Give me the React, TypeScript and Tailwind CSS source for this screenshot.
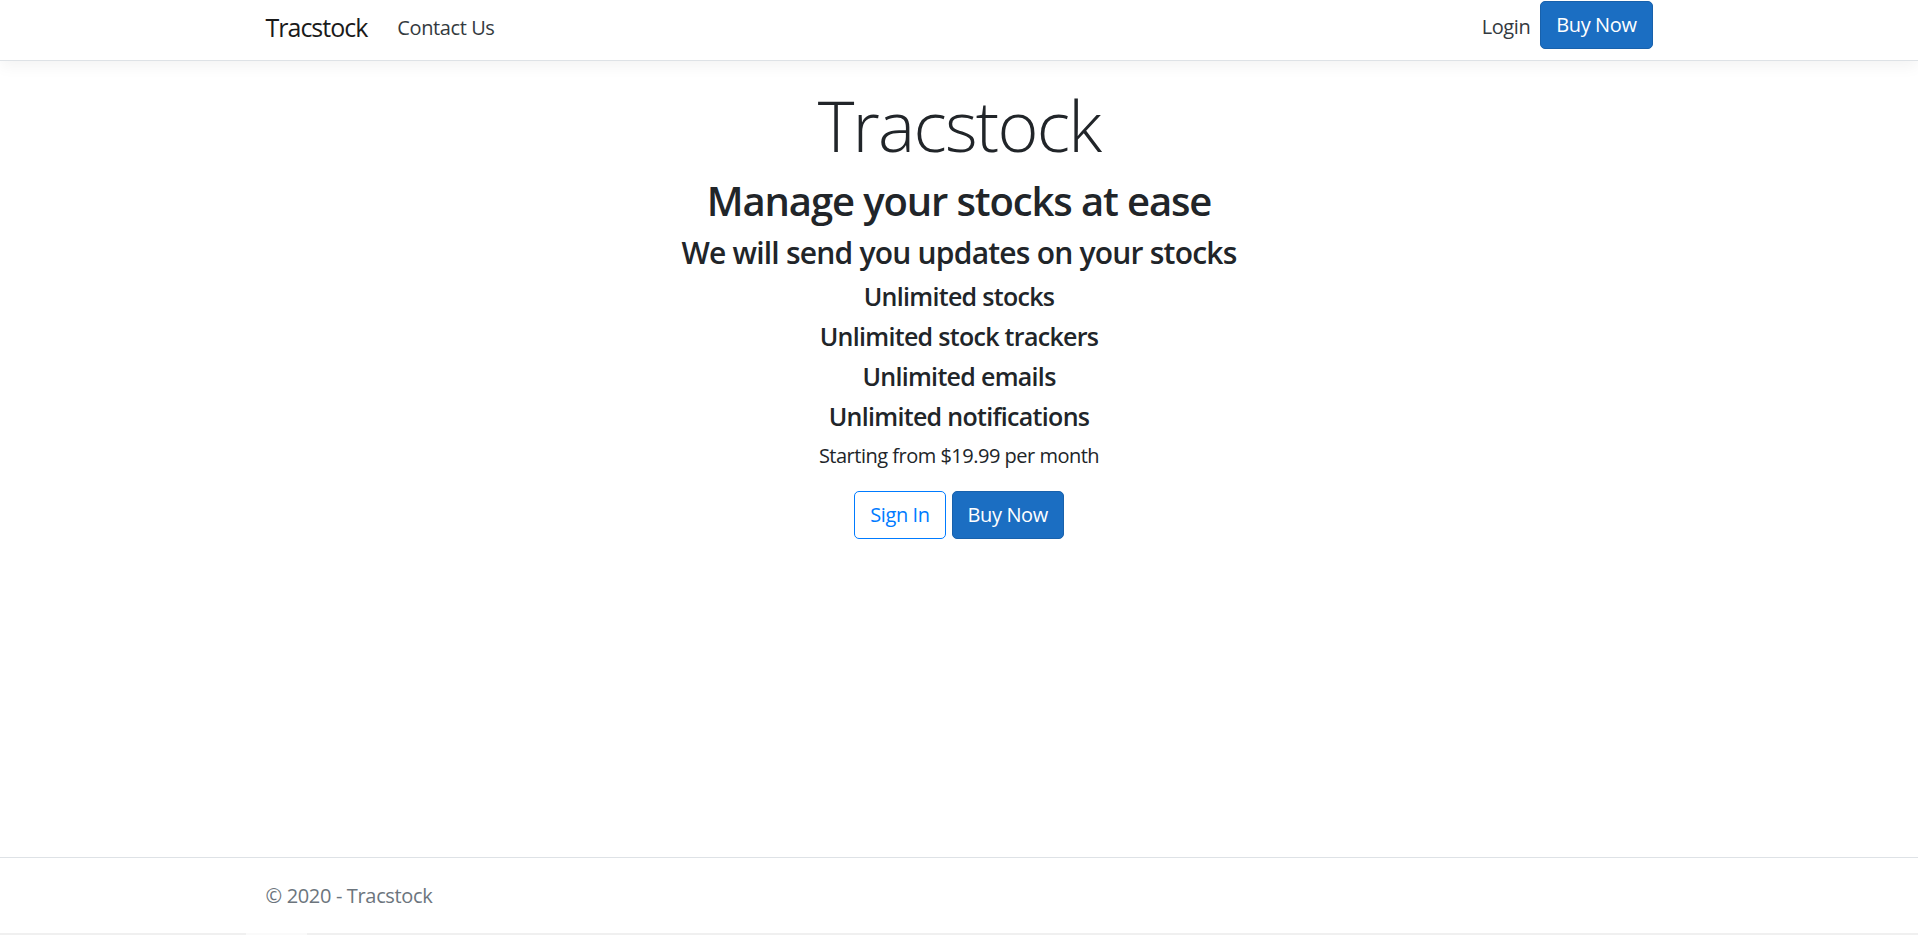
import React from "react";

const features = [
  "Unlimited stocks",
  "Unlimited stock trackers",
  "Unlimited emails",
  "Unlimited notifications",
];

const App = () => {
  return (
    <div className="flex h-[935px] flex-col overflow-hidden bg-white font-['Open_Sans','Noto_Sans',sans-serif] text-[#212529]">
      {/* ヘッダー */}
      <header className="relative z-10 h-[61px] shrink-0 border-b border-[#dee2e6] bg-white shadow-[0_5px_15px_rgba(0,0,0,0.05)]">
        <nav className="mx-auto flex h-full w-[1387px] items-start pt-px">
          <a href="#" className="mr-[20px] flex h-[53px] items-center text-[25px] tracking-[-0.04em] text-[#1a1a1a]">
            Tracstock
          </a>
          <a href="#" className="flex h-[53px] items-center px-[10px] text-[20px] tracking-[-0.02em] text-[#343a40]">
            Contact Us
          </a>
          <div className="ml-auto flex items-start">
            <a href="#" className="flex h-[52px] items-center px-[10px] text-[20px] tracking-[-0.02em] text-[#343a40]">
              Login
            </a>
            <button className="h-[48px] rounded-[5px] border border-[#1861ac] bg-[#1b6ec2] px-[15px] text-[20px] leading-[30px] tracking-[-0.02em] text-white">
              Buy Now
            </button>
          </div>
        </nav>
      </header>

      {/* メイン */}
      <main className="flex-1 pt-[22px] text-center">
        <h1 className="mb-[10px] text-[70px] font-light leading-[84px] tracking-[-0.025em]">Tracstock</h1>
        <h2 className="mb-[10px] text-[40px] font-semibold leading-[48px] tracking-[-0.028em]">
          Manage your stocks at ease
        </h2>
        <h4 className="mb-[10px] text-[30px] font-semibold leading-[36px] tracking-[-0.026em]">
          We will send you updates on your stocks
        </h4>
        {features.map((f) => (
          <h5 key={f} className="mb-[10px] text-[25px] font-semibold leading-[30px] tracking-[-0.028em]">
            {f}
          </h5>
        ))}
        <p className="mb-[20px] text-[20px] leading-[30px] tracking-[-0.025em]">
          Starting from $19.99 per month
        </p>
        <div className="flex justify-center gap-[6px]">
          <button className="h-[48px] rounded-[5px] border border-[#007bff] bg-white px-[15px] text-[20px] leading-[30px] tracking-[-0.02em] text-[#007bff]">
            Sign In
          </button>
          <button className="h-[48px] rounded-[5px] border border-[#1861ac] bg-[#1b6ec2] px-[15px] text-[20px] leading-[30px] tracking-[-0.02em] text-white">
            Buy Now
          </button>
        </div>
      </main>

      {/* フッター */}
      <footer className="h-[76px] shrink-0 border-t border-[#dee2e6] text-[20px] leading-[75px] tracking-[-0.017em] text-[#6c757d]">
        <div className="mx-auto w-[1387px] whitespace-nowrap">&copy; 2020 - Tracstock</div>
      </footer>
      <div className="flex h-[2px] shrink-0 bg-[#f0f0f0]">
        <div className="ml-[246px] w-[61px] bg-[#fafafa]" />
      </div>
    </div>
  );
};

export default App;
